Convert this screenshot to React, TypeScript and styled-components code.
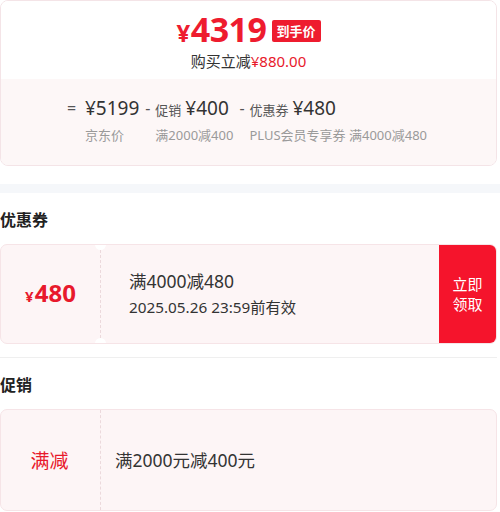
import styled, { createGlobalStyle } from "styled-components";

const GlobalStyle = createGlobalStyle`
  body {
    margin: 0;
    background: #ffffff;
    font-family: "Noto Sans", "Noto Sans CJK SC", sans-serif;
    color: #333333;
  }
`;

const Page = styled.div`
  width: 500px;
  display: flex;
  flex-direction: column;
`;

const PriceCard = styled.div`
  width: 497px;
  border: 1px solid #f4e4e7;
  border-radius: 8px;
  overflow: hidden;
  box-sizing: border-box;
`;

const PriceTop = styled.div`
  height: 78px;
  display: flex;
  flex-direction: column;
  align-items: center;
  padding-top: 10px;
  box-sizing: border-box;
  background: #ffffff;
`;

const PriceLine = styled.div`
  display: flex;
  align-items: center;
  gap: 5px;
  height: 40px;
`;

const BigPrice = styled.span`
  color: #ee1c2f;
  font-size: 34px;
  font-weight: 700;
  line-height: 36px;
  letter-spacing: -0.5px;
`;

const Yen = styled.span<{ $size: number }>`
  font-size: ${(p) => p.$size}px;
  margin-right: 1px;
`;

const Tag = styled.span`
  background: #ee1c2f;
  color: #ffffff;
  font-size: 13px;
  font-weight: 700;
  padding: 2px 5px;
  border-radius: 2px;
  line-height: 18px;
`;

const SaveLine = styled.div`
  font-size: 15px;
  color: #333333;
  line-height: 20px;
`;

const Red = styled.span`
  color: #e8192c;
`;

const PriceBottom = styled.div`
  height: 86px;
  background: #fdf7f7;
  display: flex;
  align-items: flex-start;
  padding: 16px 0 0 66px;
  box-sizing: border-box;
`;

const Op = styled.span<{ $w: number }>`
  font-size: 16px;
  color: #555555;
  line-height: 26px;
  width: ${(p) => p.$w}px;
`;

const Col = styled.div<{ $mr: number }>`
  display: flex;
  flex-direction: column;
  margin-right: ${(p) => p.$mr}px;
`;

const Value = styled.div`
  display: flex;
  align-items: baseline;
  gap: 4px;
  height: 26px;
  color: #333333;
  font-size: 19px;
  line-height: 26px;
`;

const Small = styled.span`
  font-size: 13px;
  color: #555555;
`;

const Label = styled.div`
  font-size: 13px;
  color: #9a9a9a;
  margin-top: 5px;
  line-height: 18px;
  white-space: nowrap;
`;

const Band = styled.div`
  height: 9px;
  background: #f5f7fa;
  margin-top: 18px;
`;

const Heading = styled.h3<{ $mt: number }>`
  margin: ${(p) => p.$mt}px 0 0 0;
  font-size: 16px;
  font-weight: 700;
  color: #222222;
  line-height: 22px;
`;

const Ticket = styled.div<{ $h: number }>`
  width: 497px;
  height: ${(p) => p.$h}px;
  margin-top: 13px;
  display: flex;
  border: 1px solid #f6e4e7;
  border-radius: 7px;
  background: #fdf5f6;
  box-sizing: border-box;
  overflow: hidden;
  position: relative;
`;

const Stub = styled.div<{ $notch?: boolean }>`
  width: 100px;
  flex-shrink: 0;
  display: flex;
  align-items: center;
  justify-content: center;
  border-right: 1px dashed #ecd9dc;
  position: relative;
  box-sizing: border-box;

  &::before,
  &::after {
    content: "";
    display: ${(p) => (p.$notch ? "block" : "none")};
    position: absolute;
    right: -6px;
    width: 11px;
    height: 11px;
    border-radius: 50%;
    background: #ffffff;
  }
  &::before {
    top: -6px;
  }
  &::after {
    bottom: -6px;
  }
`;

const StubPrice = styled.span`
  color: #e8192c;
  font-size: 24px;
  font-weight: 700;
  margin-top: -4px;
`;

const StubText = styled.span`
  color: #e8192c;
  font-size: 19px;
  margin-left: -2px;
`;

const Body = styled.div<{ $pl: number }>`
  flex: 1;
  display: flex;
  flex-direction: column;
  justify-content: center;
  padding-left: ${(p) => p.$pl}px;
  gap: 4px;
`;

const Cond = styled.div`
  font-size: 17.5px;
  color: #333333;
  line-height: 22px;
`;

const Expire = styled.div`
  font-size: 15.3px;
  color: #333333;
  line-height: 22px;
`;

const Claim = styled.button`
  width: 57px;
  border: none;
  background: #f5142c;
  color: #ffffff;
  font-family: inherit;
  font-size: 15px;
  line-height: 20px;
  padding: 0;
  display: flex;
  align-items: center;
  justify-content: center;
  text-align: center;
`;

const Divider = styled.div`
  height: 1px;
  background: #efefef;
  margin-top: 13px;
  width: 497px;
`;

export default function App() {
  return (
    <Page>
      <GlobalStyle />
      <PriceCard>
        <PriceTop>
          <PriceLine>
            <BigPrice>
              <Yen $size={24}>¥</Yen>4319
            </BigPrice>
            <Tag>到手价</Tag>
          </PriceLine>
          <SaveLine>
            购买立减<Red>¥880.00</Red>
          </SaveLine>
        </PriceTop>
        <PriceBottom>
          <Op $w={18}>=</Op>
          <Col $mr={6}>
            <Value>¥5199</Value>
            <Label>京东价</Label>
          </Col>
          <Op $w={10}>-</Op>
          <Col $mr={6}>
            <Value>
              <Small>促销</Small>¥400
            </Value>
            <Label>满2000减400</Label>
          </Col>
          <Op $w={10}>-</Op>
          <Col $mr={0}>
            <Value>
              <Small>优惠券</Small>¥480
            </Value>
            <Label>PLUS会员专享券 满4000减480</Label>
          </Col>
        </PriceBottom>
      </PriceCard>

      <Band />

      <Heading $mt={16}>优惠券</Heading>
      <Ticket $h={100}>
        <Stub $notch>
          <StubPrice>
            <Yen $size={15}>¥</Yen>480
          </StubPrice>
        </Stub>
        <Body $pl={28}>
          <Cond>满4000减480</Cond>
          <Expire>2025.05.26 23:59前有效</Expire>
        </Body>
        <Claim>
          立即
          <br />
          领取
        </Claim>
      </Ticket>

      <Divider />

      <Heading $mt={16}>促销</Heading>
      <Ticket $h={102}>
        <Stub>
          <StubText>满减</StubText>
        </Stub>
        <Body $pl={14}>
          <Cond>满2000元减400元</Cond>
        </Body>
      </Ticket>
    </Page>
  );
}
